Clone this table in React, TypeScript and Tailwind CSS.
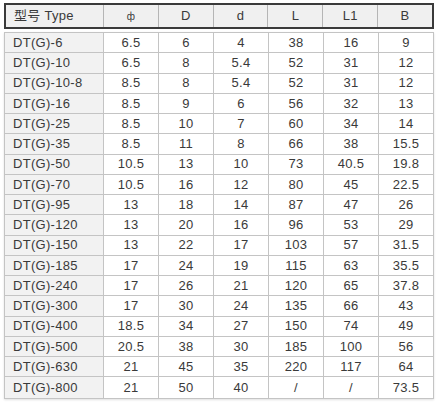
const cols = ['ф', 'D', 'd', 'L', 'L1', 'B']

const rows: string[][] = [
  ['DT(G)-6', '6.5', '6', '4', '38', '16', '9'],
  ['DT(G)-10', '6.5', '8', '5.4', '52', '31', '12'],
  ['DT(G)-10-8', '8.5', '8', '5.4', '52', '31', '12'],
  ['DT(G)-16', '8.5', '9', '6', '56', '32', '13'],
  ['DT(G)-25', '8.5', '10', '7', '60', '34', '14'],
  ['DT(G)-35', '8.5', '11', '8', '66', '38', '15.5'],
  ['DT(G)-50', '10.5', '13', '10', '73', '40.5', '19.8'],
  ['DT(G)-70', '10.5', '16', '12', '80', '45', '22.5'],
  ['DT(G)-95', '13', '18', '14', '87', '47', '26'],
  ['DT(G)-120', '13', '20', '16', '96', '53', '29'],
  ['DT(G)-150', '13', '22', '17', '103', '57', '31.5'],
  ['DT(G)-185', '17', '24', '19', '115', '63', '35.5'],
  ['DT(G)-240', '17', '26', '21', '120', '65', '37.8'],
  ['DT(G)-300', '17', '30', '24', '135', '66', '43'],
  ['DT(G)-400', '18.5', '34', '27', '150', '74', '49'],
  ['DT(G)-500', '20.5', '38', '30', '185', '100', '56'],
  ['DT(G)-630', '21', '45', '35', '220', '117', '64'],
  ['DT(G)-800', '21', '50', '40', '/', '/', '73.5'],
]

export default function App() {
  return (
    <main
      className="w-[439px] h-[406px] bg-white pt-[3px] pl-[4px] text-[13px] tracking-[0.3px] text-[#3a3a3a]"
      style={{ fontFamily: '"Liberation Sans", Arial, "Noto Sans CJK SC", sans-serif' }}
    >
      {/* header bar */}
      <div className="w-[430px] h-[26px] flex border-2 border-[#3a3a3a] bg-[#f0f0f0]">
        <div className="w-[98px] flex items-center pl-[8px] border-r border-[#b5b5b5]">型号 Type</div>
        {cols.map((c, i) => (
          <div
            key={c}
            className={`flex-1 flex items-center justify-center ${i < cols.length - 1 ? 'border-r border-[#b5b5b5]' : ''} ${c === 'ф' ? 'text-[10px]' : ''}`}
          >
            {c}
          </div>
        ))}
      </div>

      {/* body */}
      <div className="mt-[3px] w-[430px] border border-[#c4c4c4] shadow-[0_1px_2px_rgba(0,0,0,0.12)]">
        {rows.map((r, ri) => (
          <div
            key={r[0]}
            className={`flex h-[20.25px] ${ri < rows.length - 1 ? 'border-b border-[#c4c4c4]' : ''}`}
          >
            <div className="w-[99px] shrink-0 flex items-center pl-[8px] bg-[#f2f2f2] border-r border-[#c4c4c4]">
              {r[0]}
            </div>
            {r.slice(1).map((v, i) => (
              <div
                key={i}
                className={`flex-1 flex items-center justify-center ${i < 5 ? 'border-r border-[#c4c4c4]' : ''}`}
              >
                {v}
              </div>
            ))}
          </div>
        ))}
      </div>
    </main>
  )
}
